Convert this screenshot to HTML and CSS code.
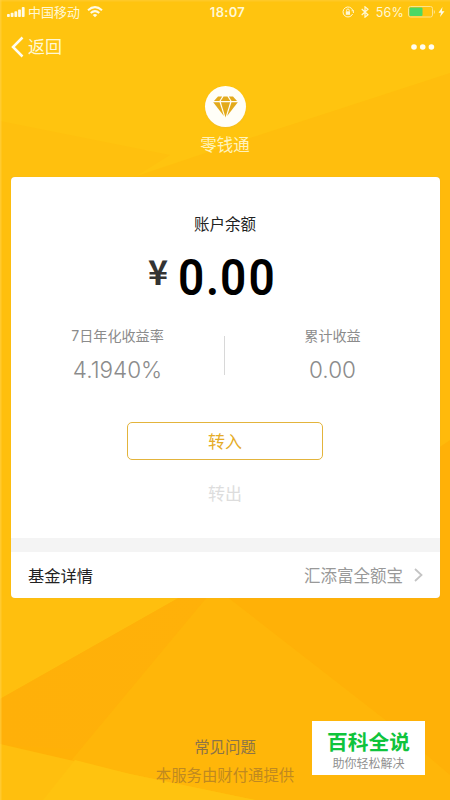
FILE: index.html
```html
<!DOCTYPE html>
<html lang="zh-CN">
<head>
<meta charset="utf-8">
<title>零钱通</title>
<link rel="stylesheet" href="styles.css">
</head>
<body>
<div class="screen">
  <svg class="backdrop" viewBox="0 0 450 800" preserveAspectRatio="none" aria-hidden="true">
    <defs>
      <linearGradient id="fold" x1="0" y1="0" x2="1" y2="0">
        <stop offset="0" stop-color="#ffb009"/>
        <stop offset="1" stop-color="#ffb109"/>
      </linearGradient>
    </defs>
    <rect width="450" height="800" fill="#ffc40f"/>
    <path d="M0 121L170 155L130 180H0Z" fill="#ffc00e"/>
    <path d="M450 73L250 138L125 180H450Z" fill="#ffbe0d"/>
    <path d="M0 180H11V700H0Z" fill="#ffbf0d"/>
    <path d="M438 180H450V440L438 448Z" fill="#ffba0b"/>
    <path d="M438 448L450 440V800H0V596H438Z" fill="#ffb107"/>
    <path d="M0 596H182L0 699Z" fill="#ffbf0e"/>
    <path d="M182 596H208L85 750L0 745V699Z" fill="url(#fold)"/>
    <path d="M208 596H226L388 722L450 775V800H240L70 762Z" fill="#ffb609"/>
    <path d="M0 744L130 774L255 800H0Z" fill="#ffbf0e"/>
    <path d="M75 760L130 774L255 800H43Z" fill="#ffc30f"/>
    <rect width="1.5" height="800" fill="#ffd248" opacity=".6"/>
    <rect width="450" height="1.5" fill="#ffd248" opacity=".4"/>
  </svg>

  <header class="status">
    <div class="status-left">
      <svg width="18" height="11" viewBox="0 0 18 11" fill="#fffbe6"><rect x="0" y="7" width="2.8" height="3" rx=".8"/><rect x="3.7" y="5.8" width="2.8" height="4.2" rx=".8"/><rect x="7.4" y="4.3" width="2.8" height="5.7" rx=".8"/><rect x="11.1" y="2.4" width="2.8" height="7.6" rx=".8"/><rect x="14.8" y="0" width="2.8" height="10" rx=".8"/></svg>
      <span class="carrier">中国移动</span>
      <svg width="16" height="12" viewBox="0 0 16 12" fill="none" stroke="#fffbe6" stroke-width="2"><path d="M1 4.3Q8 -2 15 4.3M3.7 7Q8 3.2 12.3 7"/><path d="M5.7 8.9Q8 7 10.3 8.9L8 11.3Z" fill="#fffbe6" stroke="none"/></svg>
    </div>
    <span class="clock">18:07</span>
    <div class="status-right">
      <svg width="12" height="12" viewBox="0 0 12 12" fill="none" stroke="#fff8d5"><path d="M10.6 8A5 5 0 1 1 10.8 4.5M9.6 4.8H12L11.2 7"/><rect x="3.8" y="5.3" width="4.2" height="3.5" fill="#fff8d5" stroke="none"/><path d="M4.6 5.4V4.3a1.3 1.3 0 0 1 2.6 0v1.1"/></svg>
      <svg class="bluetooth" width="8" height="12" viewBox="0 0 8 12" fill="none" stroke="#fff8d5" stroke-width="1.2"><path d="M.7 3L7 8.7L4 11.2V.8L7 3.3L.7 9"/></svg>
      <span class="percent">56%</span>
      <svg width="27" height="12" viewBox="0 0 27 12"><rect x=".5" y=".5" width="24" height="10.5" rx="2" fill="none" stroke="#ffe38a"/><rect x="1.5" y="1.5" width="13" height="8.5" rx="1" fill="#4bd865"/><path d="M25.8 4v4q1.2-.5 1.2-2t-1.2-2" fill="#ffe38a"/></svg>
      <svg class="bolt" width="7" height="12" viewBox="0 0 7 12" fill="#fffbe6"><path d="M4.5 1L.5 6.7H3L2 11L6.5 5.2H3.8Z"/></svg>
    </div>
  </header>

  <nav class="nav">
    <a class="back"><svg width="13" height="22" viewBox="0 0 13 22" fill="none" stroke="#fffdf2" stroke-width="2.5"><path d="M11.5 1.5L2 11L11.5 20.5"/></svg><span>返回</span></a>
    <svg class="more" width="24" height="6" viewBox="0 0 24 6" fill="#fffdf2"><circle cx="3" cy="3" r="2.8"/><circle cx="11.7" cy="3" r="2.8"/><circle cx="20.4" cy="3" r="2.8"/></svg>
  </nav>

  <section class="brand">
    <div class="logo"><svg width="25" height="22" viewBox="0 0 26 22" fill="#e3aa1c"><path d="M5.2 0H9.5L6.7 4.7H1Z"/><path d="M11 0H15L18 4.7H8Z"/><path d="M16.5 0H20.8L25 4.7H19.3Z"/><path d="M.2 6H6.8L11.3 20.3Z"/><path d="M8.2 6H17.8L13 21.8Z"/><path d="M19.2 6H25.8L14.7 20.3Z"/></svg></div>
    <span class="brand-name">零钱通</span>
  </section>

  <main class="card">
    <h1 class="balance-label">账户余额</h1>
    <div class="balance"><span class="currency">¥</span><span class="amount">0<span class="point">.</span>00</span></div>
    <div class="stats">
      <div class="stat"><span class="stat-label">7日年化收益率</span><span class="stat-value">4.1940%</span></div>
      <div class="divider"></div>
      <div class="stat"><span class="stat-label">累计收益</span><span class="stat-value">0.00</span></div>
    </div>
    <button class="transfer-in">转入</button>
    <span class="transfer-out">转出</span>
    <div class="band"></div>
    <div class="fund">
      <span class="fund-title">基金详情</span>
      <span class="fund-name">汇添富全额宝</span>
      <svg width="9" height="14" viewBox="0 0 9 14" fill="none" stroke="#c4c4c4" stroke-width="1.8"><path d="M1 1L7.5 7L1 13"/></svg>
    </div>
  </main>

  <footer class="footer">
    <a class="faq">常见问题</a>
    <span class="provider">本服务由财付通提供</span>
  </footer>

  <aside class="badge">
    <strong>百科全说</strong>
    <span>助你轻松解决</span>
  </aside>
</div>
</body>
</html>
```
FILE: styles.css
```css
* { box-sizing: border-box; }
body {
  margin: 0;
  font-family: Inter, "Noto Sans CJK SC", sans-serif;
}
.screen {
  position: relative;
  width: 450px;
  height: 800px;
  overflow: hidden;
  display: flex;
  flex-direction: column;
}
.screen > * { position: relative; flex-shrink: 0; }
.screen > .backdrop {
  position: absolute;
  inset: 0;
  width: 100%;
  height: 100%;
}
.status {
  height: 24px;
  padding: 0 5px 0 7px;
  display: grid;
  grid-template-columns: 1fr auto 1fr;
  align-items: center;
  color: #fff8d5;
}
.status-left, .status-right { display: flex; align-items: center; }
.status-right { justify-content: flex-end; }
.carrier {
  margin: 0 7px 0 3px;
  font-size: 13px;
  line-height: 22px;
}
.clock {
  margin-left: 3px;
  font-size: 13px;
  font-weight: 600;
  letter-spacing: .3px;
}
.bluetooth { margin: 0 7px 0 7px; }
.percent {
  margin-right: 4px;
  font-size: 12.5px;
  letter-spacing: .2px;
}
.bolt { margin-left: 3px; }
.nav {
  height: 46px;
  padding: 0 15px 0 11px;
  display: flex;
  align-items: center;
  justify-content: space-between;
}
.back {
  display: flex;
  align-items: center;
  gap: 4px;
  color: #fff8d5;
  font-size: 17px;
  line-height: 26px;
}
.brand {
  height: 107px;
  padding-top: 16px;
  display: flex;
  flex-direction: column;
  align-items: center;
}
.logo {
  width: 41px;
  height: 41px;
  border-radius: 50%;
  background: #fffef8;
  box-shadow: 0 1px 1px #e9b83488;
  display: flex;
  align-items: center;
  justify-content: center;
}
.brand-name {
  margin-top: 6px;
  color: #fff3bd;
  font-size: 16.5px;
  line-height: 25px;
}
.card {
  height: 421px;
  margin: 0 10px 0 11px;
  border-radius: 4px;
  background: #fff;
  box-shadow: 0 0 1px #d9a83a;
  display: flex;
  flex-direction: column;
  align-items: center;
}
.balance-label {
  margin: 36px 1px 0 0;
  color: #222;
  font-size: 15.5px;
  font-weight: 400;
  line-height: 24px;
}
.balance {
  width: 100%;
  height: 60px;
  margin-top: 10px;
  padding-left: 137px;
  display: flex;
  align-items: flex-start;
}
.currency {
  width: 20px;
  margin: 4px 10px 0 0;
  color: #333;
  font-family: "Noto Sans CJK SC", sans-serif;
  font-size: 34px;
  font-weight: 700;
  line-height: 40px;
}
.amount {
  color: #000;
  font-family: Roboto, sans-serif;
  font-size: 50px;
  font-weight: 600;
  line-height: 62px;
  letter-spacing: 2.4px;
  transform: scaleX(.92);
  transform-origin: left;
}
.point { margin: 0 -1.5px 0 -.5px; }
.stats {
  width: 100%;
  height: 60px;
  margin-top: 18px;
  display: grid;
  grid-template-columns: 213px 1px 215px;
}
.stat {
  display: flex;
  flex-direction: column;
  align-items: center;
  color: #8b8b8b;
}
.stat-label {
  font-size: 14.1px;
  line-height: 22px;
}
.stat-value {
  margin-top: 9px;
  font-size: 22.5px;
  font-weight: 300;
  line-height: 28px;
}
.divider {
  height: 39px;
  margin-top: 11px;
  background: #d8d8d8;
}
.transfer-in {
  width: 196px;
  height: 38px;
  margin: 37px 1px 0 0;
  padding: 0;
  border: 1.5px solid #e3b43c;
  border-radius: 5px;
  background: #fff;
  color: #e5ac27;
  font: 17px/34px "Noto Sans CJK SC", sans-serif;
}
.transfer-out {
  margin: 21px 1px 0 0;
  color: #ddd;
  font-size: 17px;
  line-height: 26px;
}
.band {
  width: 100%;
  height: 14px;
  margin-top: 31px;
  background: #f4f4f4;
}
.fund {
  width: 100%;
  height: 46px;
  padding: 0 17px;
  display: flex;
  align-items: center;
}
.fund-title {
  color: #222;
  font-size: 16.3px;
}
.fund-name {
  margin: 0 11px 0 auto;
  color: #999;
  font-size: 16.5px;
}
.footer {
  margin-top: 138px;
  display: flex;
  flex-direction: column;
  align-items: center;
}
.faq {
  color: #8b7348;
  font-size: 15.4px;
  line-height: 24px;
}
.provider {
  margin-top: 4px;
  color: #bf8920;
  font-size: 15.4px;
  line-height: 24px;
}
.screen > .badge {
  position: absolute;
  left: 312px;
  top: 721px;
  width: 113px;
  height: 54px;
  background: #fff;
  display: flex;
  flex-direction: column;
  align-items: center;
}
.badge strong {
  margin-top: 9px;
  color: #0fc43c;
  font-size: 20.7px;
  font-weight: 700;
  line-height: 26px;
}
.badge span {
  color: #909090;
  font-size: 12px;
  line-height: 15px;
}
```
